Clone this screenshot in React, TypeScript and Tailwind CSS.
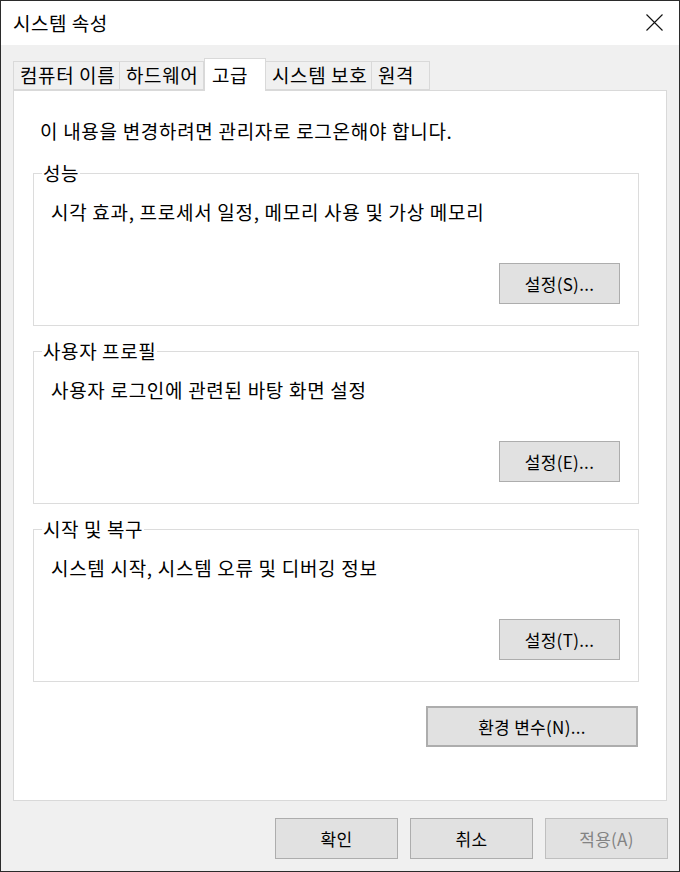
const font = { fontFamily: '"Noto Sans CJK KR", "Noto Sans", sans-serif' };

const tabs = [
  { label: "컴퓨터 이름", w: "w-[107px]" },
  { label: "하드웨어", w: "w-[84px]" },
  { label: "고급", w: "w-[62px]", active: true },
  { label: "시스템 보호", w: "w-[106px]" },
  { label: "원격", w: "w-[58px]" },
];

const groups = [
  { title: "성능", text: "시각 효과, 프로세서 일정, 메모리 사용 및 가상 메모리", button: "설정(S)..." },
  { title: "사용자 프로필", text: "사용자 로그인에 관련된 바탕 화면 설정", button: "설정(E)..." },
  { title: "시작 및 복구", text: "시스템 시작, 시스템 오류 및 디버깅 정보", button: "설정(T)..." },
];

function Button({ children, className = "" }: { children: React.ReactNode; className?: string }) {
  return (
    <div
      className={`flex h-[41px] items-center justify-center border border-[#adadad] bg-[#e1e1e1] text-[17px] tracking-[0.3px] text-black ${className}`}
    >
      {children}
    </div>
  );
}

export default function App() {
  return (
    <div
      className="flex h-[872px] w-[680px] flex-col overflow-hidden border border-[#2b2b2b] bg-[#f0f0f0] text-black"
      style={font}
    >
      {/* title bar */}
      <div className="flex h-[44px] shrink-0 items-center justify-between bg-white pl-[12px] pr-[16px]">
        <span className="text-[19px] tracking-[0.5px]">시스템 속성</span>
        <svg width="17" height="17" viewBox="0 0 17 17" className="mt-[-2px]">
          <path d="M0.5 0.5 L16.5 16.5 M16.5 0.5 L0.5 16.5" stroke="#111" strokeWidth="1.1" />
        </svg>
      </div>

      <div className="flex flex-1 flex-col pl-[12px] pr-[11px] pt-[13px]">
        {/* tabs */}
        <div className="flex h-[32px] items-end">
          {tabs.map((t) =>
            t.active ? (
              <div
                key={t.label}
                className={`relative z-10 mb-[-1px] flex h-[33px] items-center border border-b-0 border-[#d9d9d9] bg-white pl-[7px] pt-[1px] text-[19px] tracking-[0.6px] ${t.w}`}
              >
                {t.label}
              </div>
            ) : (
              <div
                key={t.label}
                className={`flex h-[29px] items-center whitespace-nowrap border border-[#d9d9d9] bg-[#f0f0f0] pl-[6px] text-[19px] tracking-[0.6px] [&:not(:first-child)]:border-l-0 ${t.w}`}
              >
                {t.label}
              </div>
            )
          )}
        </div>

        {/* panel */}
        <div className="mr-[1px] flex h-[711px] flex-col border border-[#d9d9d9] bg-white pl-[19px] pr-[27px] pt-[27px]">
          <p className="pl-[7px] text-[19px] leading-[26px] tracking-[0.7px]">
            이 내용을 변경하려면 관리자로 로그온해야 합니다.
          </p>

          <div className="mt-[29px] flex flex-col gap-[25px]">
            {groups.map((g) => (
              <div key={g.title} className="relative flex h-[153px] flex-col border border-[#dcdcdc] pl-[17px] pr-[18px]">
                <span className="absolute left-[8px] top-[-14px] bg-white px-[1px] text-[19px] leading-[26px] tracking-[0.6px]">
                  {g.title}
                </span>
                <p className="mt-[25px] text-[19px] leading-[26px] tracking-[0.7px]">{g.text}</p>
                <div className="mb-[21px] mt-auto flex justify-end">
                  <Button className="w-[121px]">{g.button}</Button>
                </div>
              </div>
            ))}
          </div>

          <div className="mr-[1px] mt-[24px] flex justify-end">
            <Button className="w-[212px] border-2 border-[#0078d7]">환경 변수(N)...</Button>
          </div>
        </div>

        {/* footer */}
        <div className="mt-[17px] flex justify-end gap-[12px]">
          <Button className="w-[123px]">확인</Button>
          <Button className="w-[123px]">취소</Button>
          <Button className="w-[123px] border-[#bfbfbf] bg-[#cccccc] !text-[#838383]">적용(A)</Button>
        </div>
      </div>
    </div>
  );
}
